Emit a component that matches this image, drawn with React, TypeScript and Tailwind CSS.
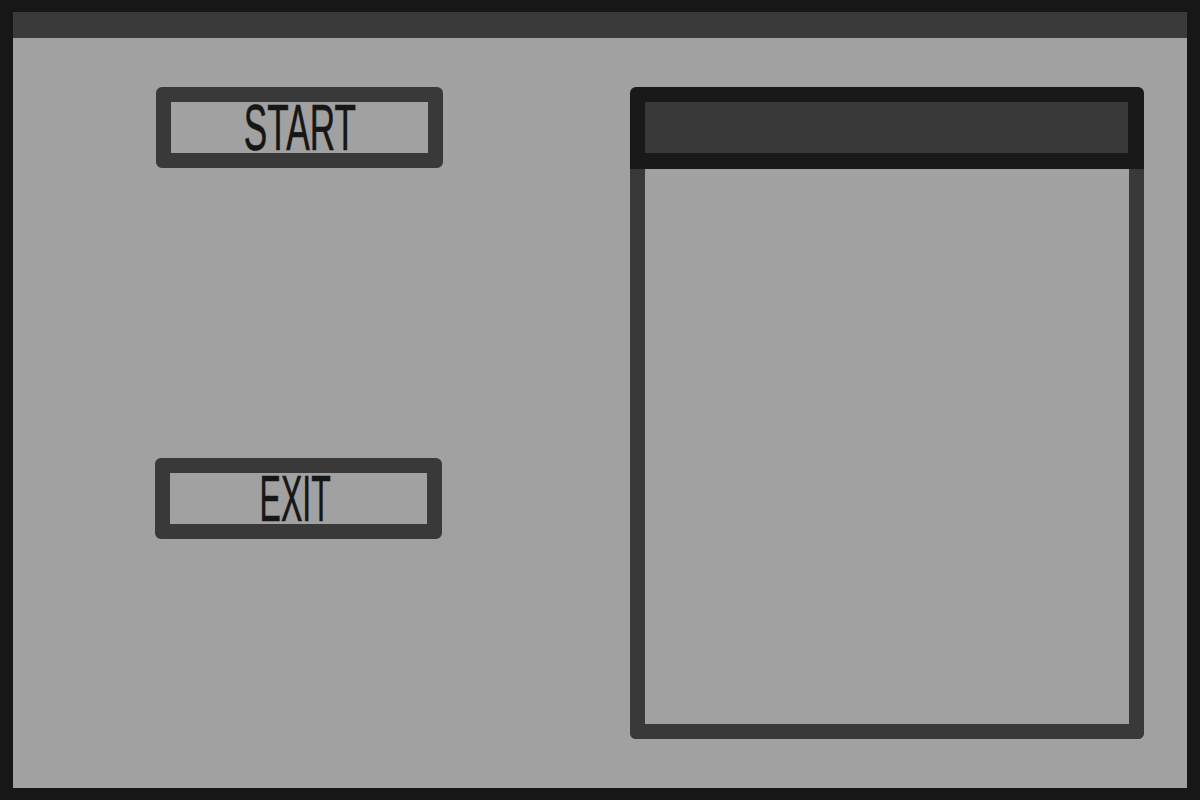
import type { ReactNode } from 'react'

function MenuButton({ children, className = '', textClass = '' }: { children: ReactNode; className?: string; textClass?: string }) {
  return (
    <button
      type="button"
      className={`flex h-[81px] w-[287px] items-center justify-center overflow-hidden rounded-md border-[15px] border-[#393939] bg-[#a1a1a1] ${className}`}
    >
      <span
        className={`inline-block origin-center font-['Liberation_Sans',Arial,sans-serif] text-[64px] leading-none text-[#161616] [-webkit-text-stroke:0.6px_#161616] ${textClass}`}
      >
        {children}
      </span>
    </button>
  )
}

export default function App() {
  return (
    <div className="flex h-[800px] w-[1200px] flex-col bg-[#171717] px-[13px] pt-[12px] pb-[12px]">
      <div className="h-[26px] bg-[#3a3a3a]" />
      <div className="flex flex-1 bg-[#a1a1a1] pt-[49px]">
        <div className="flex flex-col pl-[143px]">
          <MenuButton textClass="scale-x-[0.55]">START</MenuButton>
          <MenuButton className="mt-[290px] -ml-px h-[80px]" textClass="scale-x-[0.5] -translate-x-[3px]">
            EXIT
          </MenuButton>
        </div>
        <div className="ml-[187px] flex h-[652px] w-[514px] flex-col">
          <div className="rounded-t-md bg-[#191919] p-[15px] pr-[16px] pb-[16px]">
            <div className="h-[51px] bg-[#393939]" />
          </div>
          <div className="flex-1 rounded-b-md border-x-[15px] border-b-[15px] border-[#393939]" />
        </div>
      </div>
    </div>
  )
}
